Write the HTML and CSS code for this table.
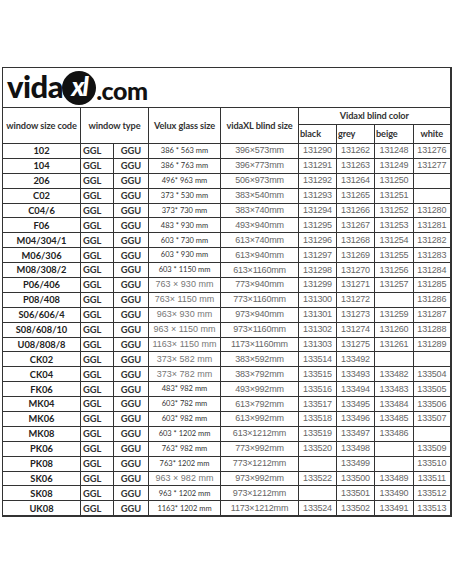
FILE: index.html
```html
<!DOCTYPE html>
<html>
<head>
<meta charset="utf-8">
<link rel="stylesheet" href="styles.css">
</head>
<body>
<div class="page">
<table class="sheet">
<colgroup>
<col class="c1"><col class="c2"><col class="c3"><col class="c4"><col class="c5"><col class="c6"><col class="c7"><col class="c8"><col class="c9">
</colgroup>
<tr class="logo-row">
<td colspan="9" class="logo-cell">
<div class="logo"><span class="vida">vida</span><span class="xl"><span class="xl-text">xl</span></span><span class="com">.com</span></div>
</td>
</tr>
<tr class="h1">
<th rowspan="2">window size code</th>
<th rowspan="2" colspan="2">window type</th>
<th rowspan="2">Velux glass size</th>
<th rowspan="2">vidaXL blind size</th>
<th colspan="4">Vidaxl blind color</th>
</tr>
<tr class="h2">
<th class="l">black</th><th class="l">grey</th><th class="l">beige</th><th>white</th>
</tr>
<tr><td class="code">102</td><td class="ggl">GGL</td><td class="ggu">GGU</td><td class="vs">386 * 563 mm</td><td class="bs">396×573mm</td><td class="n">131290</td><td class="n">131262</td><td class="n">131248</td><td class="n">131276</td></tr>
<tr><td class="code">104</td><td class="ggl">GGL</td><td class="ggu">GGU</td><td class="vs">386 * 763 mm</td><td class="bs">396×773mm</td><td class="n">131291</td><td class="n">131263</td><td class="n">131249</td><td class="n">131277</td></tr>
<tr><td class="code">206</td><td class="ggl">GGL</td><td class="ggu">GGU</td><td class="vs">496* 963 mm</td><td class="bs">506×973mm</td><td class="n">131292</td><td class="n">131264</td><td class="n">131250</td><td class="n"></td></tr>
<tr><td class="code">C02</td><td class="ggl">GGL</td><td class="ggu">GGU</td><td class="vs">373 * 530 mm</td><td class="bs">383×540mm</td><td class="n">131293</td><td class="n">131265</td><td class="n">131251</td><td class="n"></td></tr>
<tr><td class="code">C04/6</td><td class="ggl">GGL</td><td class="ggu">GGU</td><td class="vs">373* 730 mm</td><td class="bs">383×740mm</td><td class="n">131294</td><td class="n">131266</td><td class="n">131252</td><td class="n">131280</td></tr>
<tr><td class="code">F06</td><td class="ggl">GGL</td><td class="ggu">GGU</td><td class="vs">483 * 930 mm</td><td class="bs">493×940mm</td><td class="n">131295</td><td class="n">131267</td><td class="n">131253</td><td class="n">131281</td></tr>
<tr><td class="code">M04/304/1</td><td class="ggl">GGL</td><td class="ggu">GGU</td><td class="vs">603 * 730 mm</td><td class="bs">613×740mm</td><td class="n">131296</td><td class="n">131268</td><td class="n">131254</td><td class="n">131282</td></tr>
<tr><td class="code">M06/306</td><td class="ggl">GGL</td><td class="ggu">GGU</td><td class="vs">603 * 930 mm</td><td class="bs">613×940mm</td><td class="n">131297</td><td class="n">131269</td><td class="n">131255</td><td class="n">131283</td></tr>
<tr><td class="code">M08/308/2</td><td class="ggl">GGL</td><td class="ggu">GGU</td><td class="vs">603 * 1150 mm</td><td class="bs">613×1160mm</td><td class="n">131298</td><td class="n">131270</td><td class="n">131256</td><td class="n">131284</td></tr>
<tr><td class="code">P06/406</td><td class="ggl">GGL</td><td class="ggu">GGU</td><td class="vg">763 × 930 mm</td><td class="bs">773×940mm</td><td class="n">131299</td><td class="n">131271</td><td class="n">131257</td><td class="n">131285</td></tr>
<tr><td class="code">P08/408</td><td class="ggl">GGL</td><td class="ggu">GGU</td><td class="vg">763× 1150 mm</td><td class="bs">773×1160mm</td><td class="n">131300</td><td class="n">131272</td><td class="n"></td><td class="n">131286</td></tr>
<tr><td class="code">S06/606/4</td><td class="ggl">GGL</td><td class="ggu">GGU</td><td class="vg">963× 930 mm</td><td class="bs">973×940mm</td><td class="n">131301</td><td class="n">131273</td><td class="n">131259</td><td class="n">131287</td></tr>
<tr><td class="code">S08/608/10</td><td class="ggl">GGL</td><td class="ggu">GGU</td><td class="vg">963 × 1150 mm</td><td class="bs">973×1160mm</td><td class="n">131302</td><td class="n">131274</td><td class="n">131260</td><td class="n">131288</td></tr>
<tr><td class="code">U08/808/8</td><td class="ggl">GGL</td><td class="ggu">GGU</td><td class="vg">1163× 1150 mm</td><td class="bs">1173×1160mm</td><td class="n">131303</td><td class="n">131275</td><td class="n">131261</td><td class="n">131289</td></tr>
<tr><td class="code">CK02</td><td class="ggl">GGL</td><td class="ggu">GGU</td><td class="vg">373× 582 mm</td><td class="bs">383×592mm</td><td class="n">133514</td><td class="n">133492</td><td class="n"></td><td class="n"></td></tr>
<tr><td class="code">CK04</td><td class="ggl">GGL</td><td class="ggu">GGU</td><td class="vg">373× 782 mm</td><td class="bs">383×792mm</td><td class="n">133515</td><td class="n">133493</td><td class="n">133482</td><td class="n">133504</td></tr>
<tr><td class="code">FK06</td><td class="ggl">GGL</td><td class="ggu">GGU</td><td class="vs">483* 982 mm</td><td class="bs">493×992mm</td><td class="n">133516</td><td class="n">133494</td><td class="n">133483</td><td class="n">133505</td></tr>
<tr><td class="code">MK04</td><td class="ggl">GGL</td><td class="ggu">GGU</td><td class="vs">603* 782 mm</td><td class="bs">613×792mm</td><td class="n">133517</td><td class="n">133495</td><td class="n">133484</td><td class="n">133506</td></tr>
<tr><td class="code">MK06</td><td class="ggl">GGL</td><td class="ggu">GGU</td><td class="vs">603* 982 mm</td><td class="bs">613×992mm</td><td class="n">133518</td><td class="n">133496</td><td class="n">133485</td><td class="n">133507</td></tr>
<tr><td class="code">MK08</td><td class="ggl">GGL</td><td class="ggu">GGU</td><td class="vs">603 * 1202 mm</td><td class="bs">613×1212mm</td><td class="n">133519</td><td class="n">133497</td><td class="n">133486</td><td class="n"></td></tr>
<tr><td class="code">PK06</td><td class="ggl">GGL</td><td class="ggu">GGU</td><td class="vs">763* 982 mm</td><td class="bs">773×992mm</td><td class="n">133520</td><td class="n">133498</td><td class="n"></td><td class="n">133509</td></tr>
<tr><td class="code">PK08</td><td class="ggl">GGL</td><td class="ggu">GGU</td><td class="vs">763* 1202 mm</td><td class="bs">773×1212mm</td><td class="n"></td><td class="n">133499</td><td class="n"></td><td class="n">133510</td></tr>
<tr><td class="code">SK06</td><td class="ggl">GGL</td><td class="ggu">GGU</td><td class="vg">963 × 982 mm</td><td class="bs">973×992mm</td><td class="n">133522</td><td class="n">133500</td><td class="n">133489</td><td class="n">133511</td></tr>
<tr><td class="code">SK08</td><td class="ggl">GGL</td><td class="ggu">GGU</td><td class="vs">963 * 1202 mm</td><td class="bs">973×1212mm</td><td class="n"></td><td class="n">133501</td><td class="n">133490</td><td class="n">133512</td></tr>
<tr><td class="code">UK08</td><td class="ggl">GGL</td><td class="ggu">GGU</td><td class="vs">1163* 1202 mm</td><td class="bs">1173×1212mm</td><td class="n">133524</td><td class="n">133502</td><td class="n">133491</td><td class="n">133513</td></tr>
</table>
</div>
</body>
</html>
```

FILE: styles.css
```css
html, body {
  margin: 0;
  padding: 0;
  background: #ffffff;
}
.page {
  padding: 67px 0 0 2px;
}
.sheet {
  border-collapse: collapse;
  table-layout: fixed;
  width: 448px;
  border-top: 1px solid #777;
  border-left: 1px solid #555;
  border-right: 2px solid #333;
  border-bottom: 2px solid #333;
  font-family: Lato, "Liberation Sans", sans-serif;
  color: #333;
}
.c1 { width: 78px; }
.c2 { width: 33px; }
.c3 { width: 35px; }
.c4 { width: 72px; }
.c5 { width: 78px; }
.c6 { width: 38px; }
.c7 { width: 38px; }
.c8 { width: 39px; }
.c9 { width: 37px; }

.sheet td, .sheet th {
  border: 1px solid #333;
  padding: 0;
  white-space: nowrap;
  overflow: hidden;
  text-align: center;
  vertical-align: middle;
  line-height: 1;
}
.logo-row td {
  height: 39px;
  text-align: left;
}
.logo {
  display: flex;
  align-items: center;
  padding-left: 4px;
  height: 39px;
}
.vida {
  font-family: Lato, "DejaVu Sans", sans-serif;
  font-weight: 900;
  font-size: 31px;
  color: #111;
  letter-spacing: -0.5px;
  margin-top: -2px;
}
.xl {
  width: 34px;
  height: 34px;
  border-radius: 50%;
  background: #111;
  display: flex;
  align-items: center;
  justify-content: center;
  margin-left: -1px;
}
.xl-text {
  font-family: Lato, "DejaVu Sans", sans-serif;
  font-weight: 900;
  font-style: italic;
  font-size: 26px;
  color: #fff;
  margin-top: -4px;
  letter-spacing: -2px;
}
.com {
  font-family: Lato, "DejaVu Sans", sans-serif;
  font-weight: 900;
  font-size: 25px;
  color: #111;
  letter-spacing: -0.5px;
  margin-top: 5px;
}
.h1 th, .h2 th {
  font-size: 9.2px;
  font-weight: 700;
  color: #333;
  letter-spacing: -0.1px;
}
.h1 th { height: 16px; }
.h2 th { height: 18px; }
.h2 th.l {
  text-align: left;
  padding-left: 1px;
}
.sheet tr td {
  height: 13.9px;
}
.code {
  font-size: 9.3px;
  font-weight: 700;
  color: #222;
}
.ggl {
  text-align: left !important;
  padding-left: 2px !important;
  font-size: 9.3px;
  font-weight: 700;
  color: #333;
}
.ggu {
  font-size: 9.3px;
  font-weight: 700;
  color: #333;
}
.vs {
  font-size: 7.5px;
  color: #333;
}
.vg {
  font-family: "Liberation Sans", sans-serif;
  font-size: 9px;
  color: #777;
}
.bs, .n {
  font-family: "Liberation Sans", sans-serif;
  font-size: 9px;
  color: #666;
  letter-spacing: -0.2px;
}
```
